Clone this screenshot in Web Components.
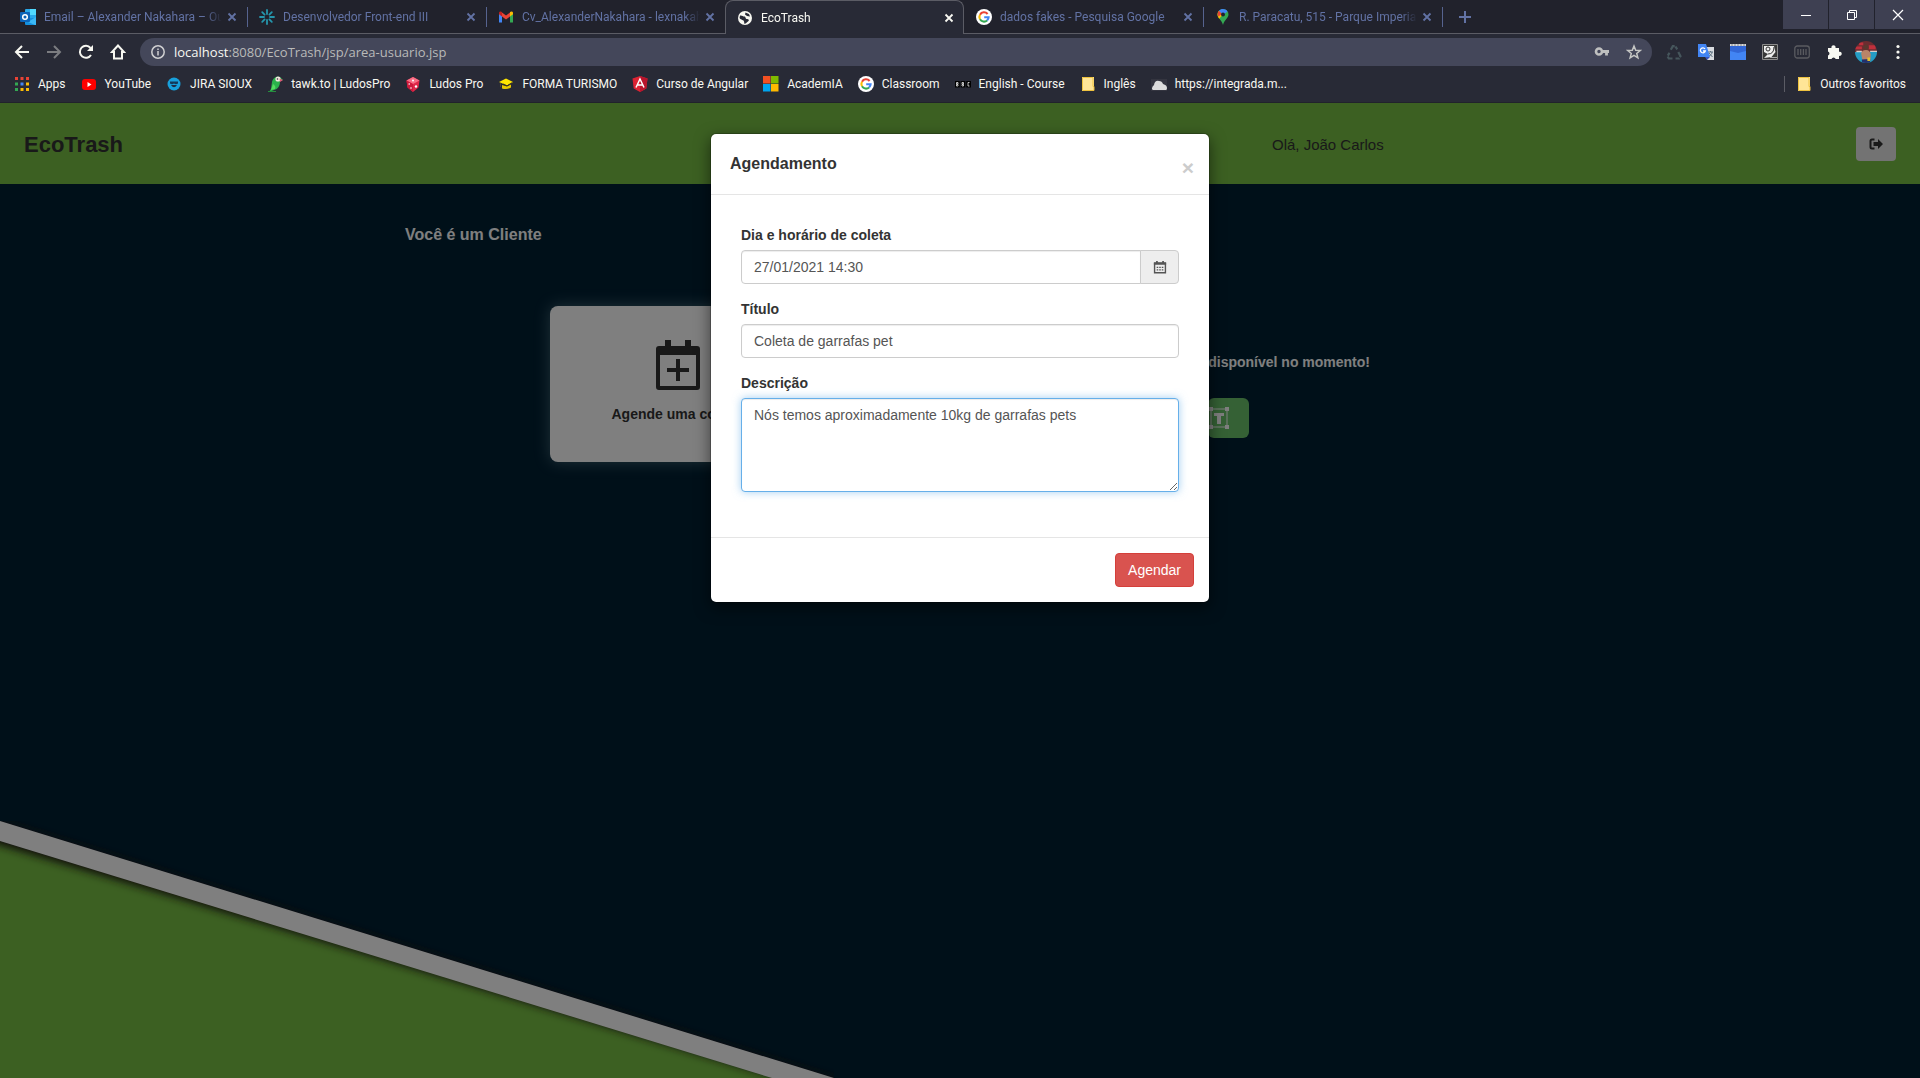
<!DOCTYPE html>
<html lang="pt-BR">
<head>
<meta charset="utf-8">
<title>EcoTrash</title>
<style>
  html, body { margin: 0; height: 100%; overflow: hidden; background: #21222c; }
  body { font-family: "Liberation Sans", Arial, sans-serif; font-size: 14px; line-height: 20px; color: #333; }
</style>
</head>
<body>
<browser-window>
  <tab-strip slot="tabs">
    <browser-tab icon="outlook">Email – Alexander Nakahara – Outlook</browser-tab>
    <browser-tab icon="spark" divider>Desenvolvedor Front-end III</browser-tab>
    <browser-tab icon="gmail" divider>Cv_AlexanderNakahara - lexnakahara</browser-tab>
    <browser-tab icon="globe" active>EcoTrash</browser-tab>
    <browser-tab icon="google">dados fakes - Pesquisa Google</browser-tab>
    <browser-tab icon="maps" divider>R. Paracatu, 515 - Parque Imperial</browser-tab>
  </tab-strip>
  <address-bar slot="toolbar" host="localhost" path=":8080/EcoTrash/jsp/area-usuario.jsp"></address-bar>
  <bookmarks-bar slot="bookmarks">
    <book-mark icon="apps">Apps</book-mark>
    <book-mark icon="youtube">YouTube</book-mark>
    <book-mark icon="jira">JIRA SIOUX</book-mark>
    <book-mark icon="parrot">tawk.to | LudosPro</book-mark>
    <book-mark icon="dice">Ludos Pro</book-mark>
    <book-mark icon="cap">FORMA TURISMO</book-mark>
    <book-mark icon="angular">Curso de Angular</book-mark>
    <book-mark icon="microsoft">AcademIA</book-mark>
    <book-mark icon="google">Classroom</book-mark>
    <book-mark icon="bbc">English - Course</book-mark>
    <book-mark icon="folder">Inglês</book-mark>
    <book-mark icon="cloud">https://integrada.m...</book-mark>
    <book-mark slot="end" icon="folder">Outros favoritos</book-mark>
  </bookmarks-bar>
  <eco-page>
    <eco-header user="João Carlos"></eco-header>
    <eco-dashboard></eco-dashboard>
    <eco-modal slot="modal" heading="Agendamento"><schedule-form></schedule-form></eco-modal>
  </eco-page>
</browser-window>

<script>
const ICONS = {
  outlook: '<rect x="5" y="0" width="11" height="13" rx="1" fill="#28a8ea"/><rect x="10" y="0" width="6" height="6" fill="#50d9ff"/><path d="M5 9h11v6a1 1 0 0 1-1 1H6a1 1 0 0 1-1-1z" fill="#1490df"/><path d="M16 8l-8 5 7 3h1z" fill="#3bb8f5"/><rect x="0" y="3" width="10" height="10" rx="1" fill="#0b64b8"/><circle cx="5" cy="8" r="2.3" fill="none" stroke="#fff" stroke-width="1.5"/>',
  spark: '<g stroke="#2596ac" stroke-width="1.8" stroke-linecap="round"><path d="M8 1v4M8 11v4M1 8h4M11 8h4M3.2 3.2l2.4 2.4M10.4 10.4l2.4 2.4M3.2 12.8l2.4-2.4M10.4 5.6l2.4-2.4"/></g>',
  gmail: '<path d="M1 4v9.500h3V7z" fill="#4285f4"/><path d="M15 4v9.500h-3V7z" fill="#34a853"/><path d="M4 3.500l4 3 4-3v4l-4 3-4-3z" fill="#ea4335"/><path d="M1 4c0-1.600 1.800-2 3-.9V7.500L1 5.300z" fill="#c5221f"/><path d="M15 4c0-1.600-1.800-2-3-.9V7.500l3-2.200z" fill="#fbbc04"/>',
  globe: '<circle cx="8" cy="8" r="7" fill="#f8f8f2"/><path d="M3 5.500c2-.5 3 1 4.500 1S8 9 10 9s2.500 1.500 1 2.500-2 2-3.500 2.500l-.5-2.500C7 10 4 10 2.500 8zM8.500 2.500L8 4.500l2 1.500 3 .5-1-2.500z" fill="#282a36"/>',
  google: '<circle cx="8" cy="8" r="8" fill="#fff"/><g fill="none" stroke-width="2.100"><path d="M11.600 5A4.600 4.600 0 0 0 4 5.700" stroke="#ea4335"/><path d="M4 5.700a4.600 4.600 0 0 0 0 4.600" stroke="#fbbc05"/><path d="M4 10.300a4.600 4.600 0 0 0 7.100 1.100" stroke="#34a853"/><path d="M11.100 11.400A4.600 4.600 0 0 0 12.600 8.200H8.200" stroke="#4285f4"/></g>',
  maps: '<path d="M8 0a5.500 5.500 0 0 0-5.500 5.500c0 3.500 4 5 5.500 10.500 1.500-5.500 5.500-7 5.500-10.500A5.500 5.500 0 0 0 8 0z" fill="#34a853"/><path d="M2.500 5.500A5.500 5.500 0 0 1 4 1.700L8 5.500 4.200 9.800C3.300 8.600 2.500 7.300 2.500 5.500z" fill="#fbbc04"/><path d="M4 1.700l3 3L3.500 7.500C2.300 5.600 2.500 3.300 4 1.700z" fill="#ea4335"/><path d="M4 1.700C6 -.5 10.500-.6 12.500 2.500L8 6z" fill="#4285f4"/><circle cx="8" cy="5.500" r="2" fill="#21222c"/>',
  apps: '<path d="M1 1h3v3H1zM6.500 1h3v3h-3zM12 1h3v3h-3z" fill="#ea4335"/><path d="M1 6.500h3v3H1zM1 12h3v3H1z" fill="#34a853"/><path d="M6.500 6.500h3v3h-3z" fill="#4285f4"/><path d="M12 6.500h3v3h-3zM12 12h3v3h-3zM6.500 12h3v3h-3z" fill="#fbbc05"/>',
  youtube: '<rect x="1" y="3" width="14" height="11" rx="3" fill="#f00"/><path d="M6.500 6v5l4-2.500z" fill="#fff"/>',
  jira: '<circle cx="8" cy="8" r="6.500" fill="#18a0dc"/><path d="M4 5.500h8v2q-2 1.500-4 0-2 1.500-4 0z" fill="#123a5c"/><path d="M5 9q3 4.500 6 0z" fill="#1f2c44"/>',
  parrot: '<path d="M5 6C6 1 10 0 13 1l3 3-3 1c0 5-2 8-6 9l-5 2 2-3z" fill="#2bb24c"/><path d="M1 15h8v1H1z" fill="#268c3e"/><path d="M6 8c2 1 3 3 2 5l-4 1z" fill="#55dd60"/><circle cx="11" cy="3" r="2.600" fill="#f2e6df"/><path d="M12.500 2.500L16 4l-3 2z" fill="#e05a77"/><circle cx="10.500" cy="3" r=".8" fill="#333"/>',
  dice: '<path d="M8 1l6.500 3.500-1 7L8 16l-5.500-4.500-1-7z" fill="#e02748"/><path d="M8 1l6.500 3.500L8 8 1.500 4.500z" fill="#f86f86"/><path d="M8 8v8l-5.500-4.500-1-7z" fill="#cf1a3c"/><g fill="#fff"><circle cx="8" cy="4.500" r="1"/><circle cx="4.200" cy="8" r=".8"/><circle cx="6" cy="12" r=".8"/><circle cx="11" cy="10.500" r="1.200"/></g>',
  cap: '<path d="M1 6l7-3.500L15 6l-6 3.500z" fill="#ffe600"/><path d="M4 9l5 1.500 4-2v3q-4 2.500-9 1z" fill="#e6c800"/><path d="M2.500 7v4" stroke="#504830"/><path d="M5 8l4 1.800 5-3" stroke="#39351c" fill="none"/>',
  angular: '<path d="M8 0l7.500 2.600-1.200 10L8 16l-6.300-3.400-1.200-10z" fill="#dd2333"/><path d="M8 0v16l6.300-3.400 1.200-10z" fill="#b8142c"/><path d="M4 11.500L8 3l4 8.500M5.500 9h5" fill="none" stroke="#fff" stroke-width="1.500"/>',
  microsoft: '<path d="M0 0h7.500v7.500H0z" fill="#f25022"/><path d="M8 0h7.500v7.500H8z" fill="#7fba00"/><path d="M0 8h7.500v7.500H0z" fill="#00a4ef"/><path d="M8 8h7.500v7.500H8z" fill="#ffb900"/>',
  bbc: '<path d="M0 5h4.800v6.500H0zM5.600 5h4.800v6.500H5.600zM11.200 5H16v6.500h-4.800z" fill="#000"/><path d="M1.500 6.500h1.500v1.500H1.500zM1.500 8.500h1.500v1.500H1.500zM7 6.500h1.500v1.500H7zM7 8.500h1.500v1.500H7zM14.500 6.500h-1.500v3.500h1.500" fill="none" stroke="#eee" stroke-width=".8"/>',
  folder: '<path d="M2 1h12v14H2z" fill="#ffe597"/><path d="M2.500 1.500h10.500v9h1v4H2.500z" fill="none" stroke="#eec23f"/>',
  cloud: '<path d="M0 3h16v12H0z" fill="#343540"/><path d="M2 14q-2.500-1.500 1-5Q4 4 8 5q3 0 4 3 4 1 4 4 0 2-1 2z" fill="#dcdcdc"/>',
  back: '<path d="M15 8H2M8 2L2 8l6 6" fill="none" stroke="#f8f8f2" stroke-width="2"/>',
  forward: '<path d="M1 8h13M8 2l6 6-6 6" fill="none" stroke="#7b7c80" stroke-width="2"/>',
  reload: '<path d="M13 11A6 6 0 1 1 12.500 4" fill="none" stroke="#f8f8f2" stroke-width="2"/><path d="M15 1v6H9z" fill="#f8f8f2"/>',
  home: '<path d="M8 1.500L2 8h2v6.500h8V8h2z" fill="none" stroke="#f8f8f2" stroke-width="2"/>',
  info: '<circle cx="8" cy="8" r="6.200" fill="none" stroke="#d0d0d2" stroke-width="1.500"/><path d="M8 7v4.500M8 4.500V6" stroke="#d0d0d2" stroke-width="1.500"/>',
  key: '<circle cx="5" cy="7.500" r="3" fill="none" stroke="#bfc0bf" stroke-width="2.600"/><path d="M8 7.500h7M12.500 7.500v4" stroke="#bfc0bf" stroke-width="2.800"/>',
  star: '<path d="M8 2l1.700 4.200 4.500.3-3.500 2.900 1.200 4.400L8 11.400l-3.900 2.400 1.200-4.400-3.500-2.900 4.500-.3z" fill="none" stroke="#c5c6c4" stroke-width="1.500"/>',
  recycle: '<g fill="none" stroke="#46565c" stroke-width="2.200"><path d="M4.800 5.800L6.800 2.200h2.500l1.900 3.200M12.300 8l2.200 4.200-1.300 2.300H9.500M6.500 14.500H2.800L1.500 12.200l2-3.500" stroke-dasharray="6 1"/></g>',
  translate: '<path d="M8 3h8v13H9z" fill="#d8dbe0"/><path d="M10 8h5M12.500 7v1M11 12c2-1 3-2 3-4M11 9l3.500 4" stroke="#5c7080" fill="none"/><path d="M0 0h8l4 13H0z" fill="#4285f4"/><path d="M7 13h5l-3 3z" fill="#3855c0"/><path d="M7 5a2.500 2.500 0 1 0 .3 2H5" fill="none" stroke="#fff" stroke-width="1.300"/>',
  mailblue: '<path d="M0 1h16v15H0z" fill="#4285f4"/><path d="M0 2h16v5l-8 2-8-2z" fill="#3267d6"/><path d="M0 0h16v2H0z" fill="#d8d8d8"/><path d="M2 0v2M5 0v2M8 0v2M11 0v2M14 0v2" stroke="#888"/>',
  picture: '<path d="M.5 .5h15v15H.5z" fill="#383838" stroke="#8b8b8b"/><path d="M2 2h10l1.500 6-4 5L2 14l4-4-4-2z" fill="#eee"/><circle cx="6" cy="5" r="2" fill="#eee" stroke="#333"/><path d="M6 10q6 0 6-7" fill="none" stroke="#333"/><path d="M8 13.500h7" stroke="#aaa"/>',
  barcode: '<rect x=".8" y="2" width="14.500" height="12" rx="2.500" fill="none" stroke="#5a5b60" stroke-width="1.300"/><path d="M4 5v6M6.700 5v6M9.400 5v6M12 5v6" stroke="#5a5b60" stroke-width="1.300"/>',
  puzzle: '<path d="M2 4h3.500a2.100 2.100 0 1 1 4 0H13v3.800a2.100 2.100 0 1 1 0 4V15H9.700a2.200 2.200 0 0 0-4.200 0H2v-3.500a2.100 2.100 0 0 0 0-4z" fill="#f8f8f2"/>',
  dots: '<g fill="#f8f8f2"><circle cx="8" cy="2.500" r="1.600"/><circle cx="8" cy="8" r="1.600"/><circle cx="8" cy="13.500" r="1.600"/></g>',
  avatar: '<defs><clipPath id="round"><circle cx="8" cy="8" r="8"/></clipPath></defs><g clip-path="url(#round)"><path d="M0 0h16v8H0z" fill="#6e2c30"/><path d="M0 8h16v8H0z" fill="#249cc4"/><path d="M0 4h5v2H0zM10 3h5v3h-5zM3 1h3v2H3z" fill="#c0303c"/><path d="M1 7h4v1.200H1zM11 7h5v1h-5z" fill="#d6cfca"/><path d="M4.500 9Q5 6.500 8 6.500T11.500 10L11 14.500H5.500z" fill="#b98468"/><circle cx="8" cy="4.500" r="1.900" fill="#5a382f"/><path d="M5 13.500l6-.5v3H5z" fill="#24306c"/><path d="M9 12h2v2.500H9z" fill="#e4bf2c"/></g>',
  minimize: '<path d="M3 8.500h10" stroke="#fff"/>',
  restore: '<path d="M3.500 5.500h7v7h-7zM5.500 5V3.500h7v7H11" fill="none" stroke="#fff"/>',
  close: '<path d="M3 3l10 10M13 3L3 13" stroke="#fff" stroke-width="1.200"/>',
  tabclose: '<path d="M4.500 4.500l7 7M11.500 4.500l-7 7" stroke="currentColor" stroke-width="1.800"/>',
  plus: '<path d="M8 2v12M2 8h12" stroke="#6272a4" stroke-width="2"/>',
  logout: '<path d="M6.500 3.500H4Q2.500 3.500 2.500 5v6q0 1.500 1.500 1.500h2.500" fill="none" stroke="#333" stroke-width="2"/><path d="M5.500 6H10V3l5 5-5 5v-3H5.500z" fill="#333"/>',
  calendar: '<path d="M1.800 3.500h12.400v11H1.800z" fill="none" stroke="#555" stroke-width="1.600"/><path d="M1 3h14v2.500H1zM3.500 1h2v3h-2zM10.500 1h2v3h-2z" fill="#555"/><path d="M4.200 8.500h1.800M7.100 8.500h1.800M10 8.500h1.800M4.200 11.200h1.800M7.100 11.200h1.800M10 11.200h1.800" stroke="#555" stroke-width="1.500"/>',
};

/* Base class: renders a template string into an open shadow root. */
class Base extends HTMLElement {
  connectedCallback() {
    if (this.shadowRoot) return;
    this.attachShadow({ mode: 'open' }).innerHTML =
      '<style>:host,*{box-sizing:border-box}button{font:inherit;border:0;padding:0;background:none;color:inherit}' + this.css() + '</style>' + this.html();
  }
  css() { return ''; }
  html() { return '<slot></slot>'; }
}
const define = (name, cls) => customElements.define(name, cls);

define('ui-icon', class extends Base {
  css() { return ':host{display:block;flex:none;width:var(--size,16px);height:var(--size,16px)}svg{display:block;width:100%;height:100%}'; }
  html() { return `<svg viewBox="0 0 16 16" aria-hidden="true">${ICONS[this.getAttribute('name')] || ''}</svg>`; }
});

define('browser-window', class extends Base {
  css() { return `:host{display:flex;flex-direction:column;height:100vh}
    .chrome{flex:none;background:#282a36;border-bottom:1px solid #21222c;font-family:Roboto,"Segoe UI",sans-serif;font-size:12px;line-height:16px;color:#f8f8f2}
    main{flex:1;min-height:0;display:flex}
    main ::slotted(*){flex:1}`; }
  html() { return '<div class="chrome"><slot name="tabs"></slot><slot name="toolbar"></slot><slot name="bookmarks"></slot></div><main><slot></slot></main>'; }
});

define('tab-strip', class extends Base {
  css() { return `:host{display:flex;height:34px;background:#21222c;box-shadow:inset 0 -1px #5b5c65}
    nav{display:flex;padding-left:8px}
    .new{display:flex;align-items:center;padding:0 14px}
    .new::before{content:"";width:1px;height:20px;margin:0 14px 0 -14px;background:#56638f}
    .win{display:flex;gap:1px;margin-left:auto;height:29px}
    .win button{width:45px;display:flex;align-items:center;justify-content:center;background:#3e4052}`; }
  html() { return `<nav><slot></slot></nav><button class="new" aria-label="Nova guia"><ui-icon name="plus"></ui-icon></button>
    <div class="win"><button aria-label="Minimizar"><ui-icon name="minimize"></ui-icon></button><button aria-label="Restaurar"><ui-icon name="restore"></ui-icon></button><button aria-label="Fechar"><ui-icon name="close"></ui-icon></button></div>`; }
});

define('browser-tab', class extends Base {
  css() { return `:host{display:flex;align-items:center;gap:8px;width:239px;height:34px;padding:0 7px 0 12px;color:#6272a4;position:relative}
    :host([divider])::before{content:"";position:absolute;left:0;top:7px;width:1px;height:20px;background:#56638f}
    :host([active]){color:#f8f8f2;background:#282a36;border:1px solid #5b5c65;border-bottom:0;border-radius:8px 8px 0 0;padding:0 6px 0 11px}
    span{flex:1;overflow:hidden;white-space:nowrap;-webkit-mask-image:linear-gradient(90deg,#000 calc(100% - 16px),transparent);margin-right:-6px}`; }
  html() { return `<ui-icon name="${this.getAttribute('icon')}"></ui-icon><span><slot></slot></span><button aria-label="Fechar guia"><ui-icon name="tabclose"></ui-icon></button>`; }
});

define('address-bar', class extends Base {
  css() { return `:host{display:flex;align-items:center;gap:16px;height:36px;padding:0 14px}
    .url{flex:1;display:flex;align-items:center;height:28px;padding:0 10px;margin:0 -2px;border-radius:14px;background:#44475a;color:#b9bab9}
    .url p{flex:1;margin:0 0 0 8px;font-family:"Open Sans",sans-serif;font-size:13px}
    .url b{font-weight:400;color:#f8f8f2}
    .url button+button{margin-left:16px}
    .me{margin:0 -3px;--size:22px}`; }
  html() {
    const b = (n, l, c = '') => `<button class="${c}" aria-label="${l}"><ui-icon name="${n}"></ui-icon></button>`;
    return b('back', 'Voltar') + b('forward', 'Avançar') + b('reload', 'Recarregar') + b('home', 'Página inicial') +
      `<div class="url"><ui-icon name="info"></ui-icon><p><b>${this.getAttribute('host')}</b>${this.getAttribute('path')}</p>${b('key', 'Senhas')}${b('star', 'Favoritar')}</div>` +
      b('recycle', 'Reciclar') + b('translate', 'Tradutor') + b('mailblue', 'Agenda') + b('picture', 'Captura') + b('barcode', 'Código') + b('puzzle', 'Extensões') + b('avatar', 'Perfil', 'me') + b('dots', 'Menu');
  }
});

define('bookmarks-bar', class extends Base {
  css() { return `:host{display:flex;align-items:center;gap:15px;height:32px;padding:0 14px 4px}
    .end{margin-left:auto;display:flex;align-items:center;gap:11px}
    .end::before{content:"";width:1px;height:16px;background:#5b5c65}`; }
  html() { return '<slot></slot><div class="end"><slot name="end"></slot></div>'; }
});

define('book-mark', class extends Base {
  css() { return `:host{display:block;flex:none}a{display:flex;align-items:center;gap:8px;color:inherit;text-decoration:none;white-space:nowrap}`; }
  html() { return `<a href="#"><ui-icon name="${this.getAttribute('icon')}"></ui-icon><slot></slot></a>`; }
});

define('eco-page', class extends Base {
  css() { return `:host{display:block;position:relative;overflow:hidden;background:#002033}
    .art{position:absolute;left:0;bottom:0;width:834px;height:257px}
    .content{position:relative}
    .backdrop{position:absolute;inset:0;background:rgba(0,0,0,.5)}
    .layer{position:absolute;inset:0;padding:30px 0}`; }
  html() { return `<svg class="art" viewBox="0 0 834 257" aria-hidden="true">
      <defs><filter id="soft" x="-5%" y="-20%" width="110%" height="140%"><feGaussianBlur stdDeviation="4"/></filter></defs>
      <path d="M0 10L803 257H0z" fill="#78c044"/>
      <path d="M-40 -12L860 265v17L-40 12z" fill="#201c18" filter="url(#soft)"/>
      <path d="M0 0L834 257H772L0 20z" fill="#fff"/></svg>
    <div class="content"><slot></slot></div><div class="backdrop"></div><div class="layer"><slot name="modal"></slot></div>`; }
});

define('eco-header', class extends Base {
  css() { return `:host{display:grid;grid-template-columns:1272px 1fr auto;align-items:center;height:81px;padding-right:24px;background:#78c044}
    h1{margin:0;padding:2px 0 0 24px;font-size:22px;line-height:24px}
    p{margin:0;padding-top:2px;font-size:15px}
    button{display:flex;align-items:center;justify-content:center;width:40px;height:34px;border-radius:4px;background:#e6e6e6}`; }
  html() { return `<h1>EcoTrash</h1><p>Olá, ${this.getAttribute('user')}</p><button aria-label="Sair"><ui-icon name="logout"></ui-icon></button>`; }
});

define('eco-dashboard', class extends Base {
  css() { return `:host{display:block;width:1110px;margin:0 auto;padding-top:41px;color:#fff}
    h2{margin:0;font-size:16px;line-height:20px}
    .row{display:flex;justify-content:space-between;padding:61px 145px 0}
    .card{display:flex;flex-direction:column;align-items:center;width:256px;height:156px;padding-top:31px;border-radius:8px;background:#fff;color:#333;font-weight:700;box-shadow:0 0 15px rgba(160,200,210,.4)}
    .card svg{width:54px;height:54px;margin-bottom:13px}
    .empty{padding-top:46px;font-weight:700}
    .empty p{margin:0 0 26px}
    .empty button{display:flex;justify-content:flex-end;align-items:center;width:41px;height:40px;padding-right:18px;border-radius:6px;background:#6bc26b}
    .empty svg{flex:none;width:24px;height:24px}`; }
  html() { return `<h2>Você é um Cliente</h2><div class="row">
    <button class="card"><svg viewBox="0 0 54 54" aria-hidden="true"><path d="M8 9h38a3 3 0 0 1 3 3v38a3 3 0 0 1-3 3H8a3 3 0 0 1-3-3V12a3 3 0 0 1 3-3zM9 18v31h36V18z" fill="#333" fill-rule="evenodd"/><path d="M14 3h6v8h-6zM34 3h6v8h-6zM25 22h4v9h9v4h-9v9h-4v-9h-9v-4h9z" fill="#333"/></svg>Agende uma coleta!</button>
    <div class="empty"><p>disponível no momento!</p><button aria-label="Detalhes"><svg viewBox="0 0 24 24" aria-hidden="true"><path d="M4 3h16v18H4z" fill="none" stroke="#fff"/><path d="M2 1h4v4H2zM18 1h4v4h-4zM2 19h4v4H2zM18 19h4v4h-4zM7 7h10v3h-3v8h-4v-8H7z" fill="#fff"/></svg></button></div></div>`; }
});

define('eco-modal', class extends Base {
  css() { return `:host{display:block;width:500px;max-width:100%;margin:0 auto;background:#fff;background-clip:padding-box;border:1px solid rgba(0,0,0,.2);border-radius:6px;box-shadow:0 5px 15px rgba(0,0,0,.5)}
    header{display:flex;justify-content:space-between;align-items:center;height:61px;padding:0 15px 0 19px;border-bottom:1px solid #e5e5e5}
    h4{margin:0;font-size:16px;line-height:24px}
    button{padding-top:6px;font-size:21px;line-height:21px;font-weight:700;color:#ccc}`; }
  html() { return `<header><h4>${this.getAttribute('heading')}</h4><button aria-label="Fechar">×</button></header><slot></slot>`; }
});

define('schedule-form', class extends Base {
  css() { return `:host{display:block}
    .body{padding:30px;display:flow-root}
    .group{margin-bottom:15px}
    label{display:block;margin-bottom:5px;font-weight:700}
    input,textarea{display:block;width:100%;margin:0;padding:6px 12px;border:1px solid #ccc;border-radius:4px;background:#fff;color:#555;font:14px/20px "Liberation Sans",Arial,sans-serif;box-shadow:inset 0 1px 1px rgba(0,0,0,.075);outline:0}
    input{height:34px}
    textarea{height:94px;border-color:#66afe9;box-shadow:inset 0 1px 1px rgba(0,0,0,.075),0 0 8px rgba(102,175,233,.6)}
    .addon{display:flex}
    .addon input{flex:1;border-radius:4px 0 0 4px}
    .addon button{display:flex;align-items:center;justify-content:center;width:39px;height:34px;margin-left:-1px;border:1px solid #ccc;border-radius:0 4px 4px 0;background:#eee;--size:14px}
    footer{display:flex;justify-content:flex-end;padding:15px;border-top:1px solid #e5e5e5}
    .send{height:34px;padding:0 12px;border:1px solid #d43f3a;border-radius:4px;background:#d9534f;color:#fff}`; }
  html() { return `<form><div class="body">
    <div class="group"><label for="when">Dia e horário de coleta</label><div class="addon"><input id="when" value="27/01/2021 14:30"><button type="button" aria-label="Abrir calendário"><ui-icon name="calendar"></ui-icon></button></div></div>
    <div class="group"><label for="title">Título</label><input id="title" value="Coleta de garrafas pet"></div>
    <div class="group"><label for="text">Descrição</label><textarea id="text">Nós temos aproximadamente 10kg de garrafas pets</textarea></div>
    </div><footer><button class="send" type="button">Agendar</button></footer></form>`; }
});
</script>
</body>
</html>
